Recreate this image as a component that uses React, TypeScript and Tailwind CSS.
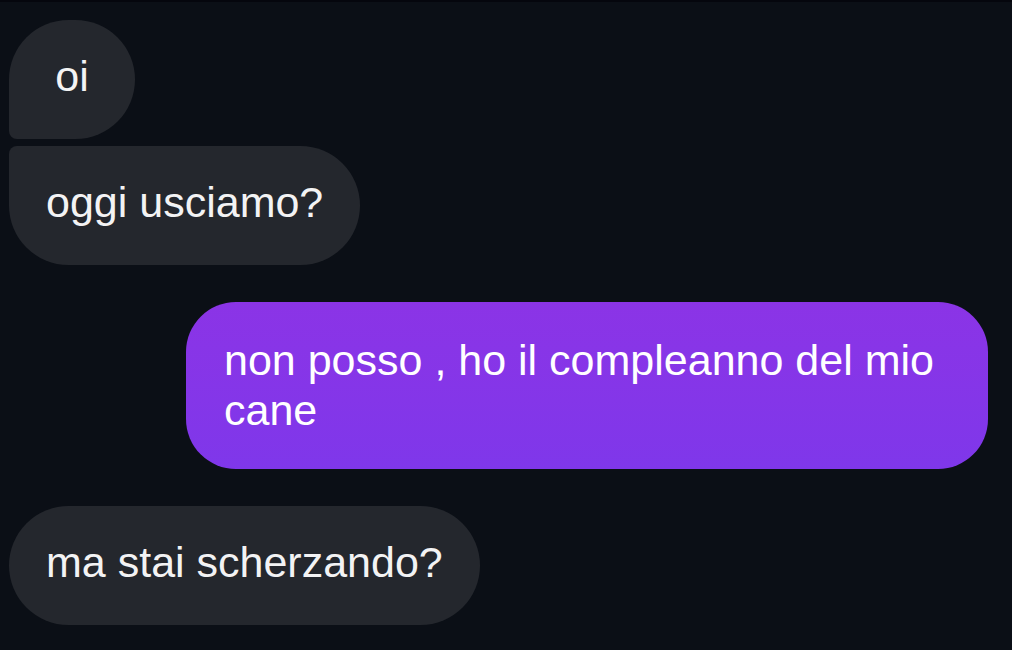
type Msg = {
  id: number;
  text: string;
  mine?: boolean;
  shape: string;
  gap: string;
};

const messages: Msg[] = [
  { id: 1, text: 'oi', shape: 'w-[126px] justify-center rounded-[60px] rounded-bl-[8px]', gap: 'mt-0' },
  { id: 2, text: 'oggi usciamo?', shape: 'px-[37px] rounded-[60px] rounded-tl-[8px]', gap: 'mt-[7px]' },
  { id: 3, text: 'non posso , ho il compleanno del mio cane', mine: true, shape: 'w-[802px] px-[38px] rounded-[50px]', gap: 'mt-[37px]' },
  { id: 4, text: 'ma stai scherzando?', shape: 'px-[37px] rounded-[60px]', gap: 'mt-[37px]' },
];

function Bubble({ msg }: { msg: Msg }) {
  const base = 'flex text-[43px] leading-[50px] font-["Liberation_Sans",Arial,sans-serif]';
  if (msg.mine) {
    return (
      <div className={`self-end mr-[24px] ${msg.gap}`}>
        <div
          className={`${base} ${msg.shape} pt-[33px] pb-[34px] text-white bg-gradient-to-b from-[#8b34e6] to-[#7f37ea]`}
        >
          {msg.text}
        </div>
      </div>
    );
  }
  return (
    <div className={`self-start ${msg.gap}`}>
      <div className={`${base} ${msg.shape} pt-[31px] pb-[38px] text-[#f3f3f4] bg-[#24272d]`}>
        {msg.text}
      </div>
    </div>
  );
}

export default function App() {
  return (
    <div className="w-[1012px] h-[650px] overflow-hidden bg-[#0b0f16] border-t-2 border-[#05060d]">
      <div className="flex flex-col pl-[9px] pt-[18px]">
        {messages.map((m) => (
          <Bubble key={m.id} msg={m} />
        ))}
      </div>
    </div>
  );
}
